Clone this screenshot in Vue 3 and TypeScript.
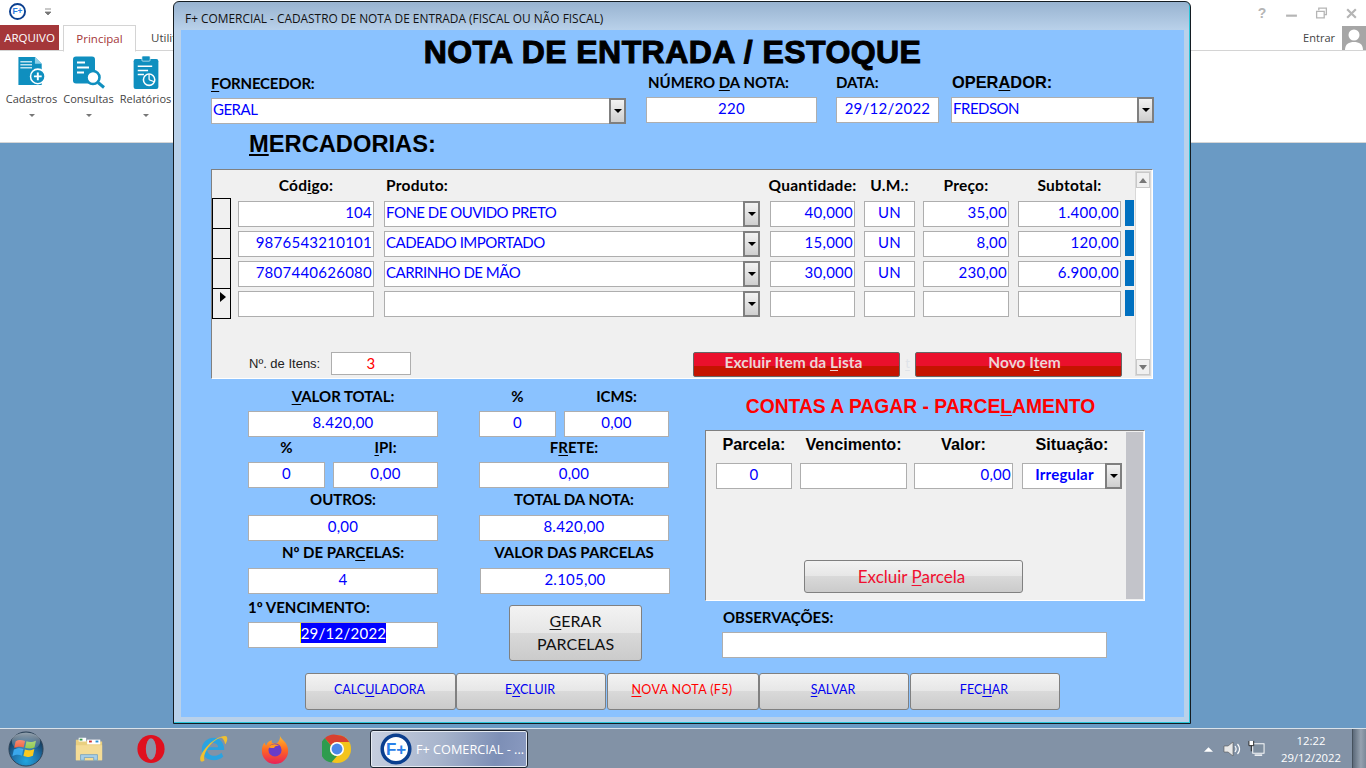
<template>
  <div class="screen">
    <header class="ribbon">
      <div class="qat">
        <svg class="logo-s" viewBox="0 0 36 36"><circle cx="18" cy="18" r="16" fill="#fff" stroke="#0b3f8f" stroke-width="4"/><text x="18" y="24" text-anchor="middle" class="logo-t">F+</text></svg>
        <svg class="qat-arrow" viewBox="0 0 8 8"><path d="M1 1h6M1 4h6L4 7z" fill="#777" stroke="#777" stroke-width=".8"/></svg>
      </div>
      <div class="tabs">
        <div class="tab-file">ARQUIVO</div>
        <div class="tab-on">Principal</div>
        <div class="tab-off">Utilitários</div>
        <div class="account">Entrar
          <svg class="avatar" viewBox="0 0 24 24"><rect width="24" height="24" fill="#a6a6a6"/><circle cx="12" cy="9" r="5.5" fill="#fff"/><path d="M3 24c0-6 4-8 9-8s9 2 9 8z" fill="#fff"/></svg>
        </div>
      </div>
      <div class="ribbon-btns">
        <div class="rb">
          <svg class="ri" viewBox="0 0 30 34"><path d="M1 1h17l7 7v22H1z" fill="#0f8fbf"/><path d="M18 1l7 7h-7z" fill="#8fd0e8"/><path d="M3 6h12M3 9h12M3 12h12" stroke="#bfe3f0" stroke-width="1.5"/><circle cx="21" cy="21" r="7.5" fill="#0f8fbf" stroke="#fff" stroke-width="1.6"/><path d="M17 21h8M21 17v8" stroke="#fff" stroke-width="2"/></svg>
          <span>Cadastros</span><i class="car"></i>
        </div>
        <div class="rb">
          <svg class="ri" viewBox="0 0 32 32"><rect x="0" y="0" width="22" height="27" rx="3" fill="#0f8fbf"/><path d="M4 6h8M4 11h12M4 16h7" stroke="#fff" stroke-width="2"/><circle cx="20" cy="21" r="6.5" fill="#fff" stroke="#0f8fbf" stroke-width="2.6"/><path d="M25 26l6 5" stroke="#0f8fbf" stroke-width="3"/></svg>
          <span>Consultas</span><i class="car"></i>
        </div>
        <div class="rb">
          <svg class="ri ri3" viewBox="0 0 24 32"><rect x="0" y="3" width="24" height="29" rx="2" fill="#0f8fbf"/><rect x="8" y="0" width="8" height="5" rx="1" fill="#0f8fbf" stroke="#fff" stroke-width=".6"/><path d="M4 10h14M4 14h10M4 18h6" stroke="#fff" stroke-width="1.5"/><circle cx="15" cy="23" r="5.5" fill="#0f8fbf" stroke="#fff" stroke-width="1.5"/><path d="M15 23v-5M15 23l5 2" stroke="#fff" stroke-width="1.2"/></svg>
          <span>Relatórios</span><i class="car"></i>
        </div>
      </div>
      <div class="win-ctl">
        <span class="q">?</span>
        <svg viewBox="0 0 12 12"><path d="M1 8h10" stroke="#b5b5b5" stroke-width="2"/></svg>
        <svg viewBox="0 0 12 12"><path d="M3.5 3V1h7v6h-2M1.5 4h7v6h-7z" fill="none" stroke="#b5b5b5" stroke-width="1.2"/></svg>
        <svg viewBox="0 0 12 12"><path d="M2 2l8 8M10 2l-8 8" stroke="#b5b5b5" stroke-width="2"/></svg>
      </div>
    </header>

    <main class="desktop"></main>

    <footer class="taskbar">
      <svg class="orb" viewBox="0 0 38 38">
        <defs>
          <radialGradient id="og" cx="50%" cy="85%" r="75%"><stop offset="0" stop-color="#22a6e0"/><stop offset=".55" stop-color="#1f6ea6"/><stop offset="1" stop-color="#12324e"/></radialGradient>
          <linearGradient id="gl" x1="0" y1="0" x2="0" y2="1"><stop offset="0" stop-color="#fff" stop-opacity=".55"/><stop offset="1" stop-color="#fff" stop-opacity=".05"/></linearGradient>
        </defs>
        <circle cx="19" cy="19" r="18" fill="url(#og)" stroke="#2c4256"/>
        <path d="M8 11c3-2 6-2 10-.5l-1.500 7c-3-1.300-6-1.300-10 .5z" fill="#f0512a"/>
        <path d="M19.500 10.800c3 1.200 6 1.200 10-.5l-1.500 7c-3 1.500-7 1.500-10 .3z" fill="#86c53c"/>
        <path d="M6.200 19.500c4-1.800 7-1.800 10-.5l-1.500 7c-3-1.300-6-1.300-10 .5z" fill="#3aa8ec"/>
        <path d="M17.800 19.500c3 1.200 6 1.200 10-.5l-1.500 7c-4 1.700-7 1.700-10 .5z" fill="#fbc91f"/>
        <ellipse cx="19" cy="11" rx="15" ry="9.500" fill="url(#gl)"/>
      </svg>
      <svg class="tb folder" viewBox="0 0 32 32">
        <path d="M2 6h10l2 2h16v20H2z" fill="#e9cf80"/><path d="M5 4h8v4H5z" fill="#fff"/><rect x="6" y="5" width="3" height="2" fill="#3a9a4a"/>
        <path d="M14 6h14v5H14z" fill="#fff"/><rect x="16" y="7" width="3" height="2" fill="#cc3030"/><rect x="23" y="7" width="3" height="2" fill="#2a90d0"/>
        <path d="M2 12h28v16H2z" fill="#f4dc96"/><path d="M7 28v-6h18v6h-4v-3H11v3z" fill="#a8cfe8" stroke="#6a9cc0" stroke-width=".8"/>
      </svg>
      <svg class="tb opera" viewBox="0 0 32 32"><ellipse cx="16" cy="16" rx="14.500" ry="15" fill="#e0101e"/><ellipse cx="16" cy="16" rx="5.500" ry="11.500" fill="#8a93a6"/></svg>
      <svg class="tb ie" viewBox="0 0 32 32"><path d="M4 17C4 9 10 4 17 4s11 6 11 13H10c0 6 9 9 15 3l2 4c-8 8-23 3-23-7zM10.500 14h11c-.5-6-10-6-11 0z" fill="#2ba3e0"/><path d="M3 29C-1 24 14 3 29 2c3 0 3 5 0 9-1-5-3-7-5-7C14 7 4 22 7 28c-1 1-3 2-4 1z" fill="#f0c030"/></svg>
      <svg class="tb ff" viewBox="0 0 32 32">
        <defs><linearGradient id="ffg" x1="0" y1="0" x2="0" y2="1"><stop offset="0" stop-color="#ffc22e"/><stop offset=".5" stop-color="#ff6a20"/><stop offset="1" stop-color="#e8205a"/></linearGradient></defs>
        <path d="M21 1c1 5 9 7 9 17a14 14 0 0 1-28 0c0-4 1-7 3-9 0 2 1 3 2 3 1-4 4-5 6-5-2 3 1 3 5 3 3-3 4-6 3-9z" fill="url(#ffg)"/>
        <circle cx="16" cy="17" r="7" fill="#6a3cc8"/><path d="M9 14c3-4 9-4 12-1-3-1-5 0-6 2-2 0-4 0-6-1z" fill="#ff9a20"/>
      </svg>
      <svg class="tb chrome" viewBox="0 0 32 32"><circle cx="16" cy="16" r="15" fill="#f3c41c"/><path d="M16 1a15 15 0 0 1 13 7.500H16a7.500 7.500 0 0 0-6.500 3.800L3 4.500A15 15 0 0 1 16 1z" fill="#d8402f"/><path d="M3 4.500l6.500 7.800A7.500 7.500 0 0 0 16 23.500L10 30.500A15 15 0 0 1 3 4.500z" fill="#2e9c4e"/><circle cx="16" cy="16" r="7.500" fill="#fff"/><circle cx="16" cy="16" r="5.800" fill="#4a88e8"/></svg>
      <div class="task-app">
        <svg class="logo-l" viewBox="0 0 36 36"><circle cx="18" cy="18" r="15.500" fill="#fff" stroke="#0b3f8f" stroke-width="4"/><text x="18" y="24.500" text-anchor="middle" class="logo-t2">F+</text></svg>
        <span>F+ COMERCIAL - ...</span>
      </div>
      <div class="tray">
        <svg class="tr-a" viewBox="0 0 10 6"><path d="M0 6l5-5 5 5z" fill="#fff"/></svg>
        <svg class="tr-s" viewBox="0 0 18 18"><path d="M1 6h4l5-4v14l-5-4H1z" fill="#e8e8e8" stroke="#555" stroke-width=".6"/><path d="M12 6c1.500 2 1.500 4 0 6M14.500 4c2.500 3 2.500 7 0 10" fill="none" stroke="#fff" stroke-width="1.200"/></svg>
        <svg class="tr-n" viewBox="0 0 18 18"><rect x="5" y="4" width="12" height="10" fill="#7f8fa0" stroke="#fff"/><path d="M7 16h8" stroke="#fff" stroke-width="1.500"/><path d="M1 1v5h5V1M3.500 6v6" fill="#fff" stroke="#222"/></svg>
        <div class="clock"><span>12:22</span><span>29/12/2022</span></div>
        <div class="show-desk"></div>
      </div>
    </footer>

    <section class="window">
      <div class="titlebar">F+ COMERCIAL - CADASTRO DE NOTA DE ENTRADA (FISCAL OU NÃO FISCAL)</div>
      <div class="client">
        <h1>NOTA DE ENTRADA / ESTOQUE</h1>

        <div class="head">
          <div class="h-forn">
            <label class="lb lb-a"><u>F</u>ORNECEDOR:</label>
            <div class="combo"><span>GERAL</span><b class="dd"></b></div>
          </div>
          <div class="h-num">
            <label class="lb"><span>NÚMERO <u>D</u>A NOTA:</span></label>
            <div class="fd ctr">220</div>
          </div>
          <div class="h-data">
            <label class="lb">DATA:</label>
            <div class="fd ctr">29/12/2022</div>
          </div>
          <div class="h-op">
            <label class="lb lb-b">OPER<u>A</u>DOR:</label>
            <div class="combo"><span>FREDSON</span><b class="dd"></b></div>
          </div>
        </div>

        <h2><u>M</u>ERCADORIAS:</h2>

        <div class="sub">
          <div class="sub-main">
            <div class="sh">
              <span class="c-sel"></span>
              <span class="c-code">Cód<u>i</u>go:</span>
              <span class="c-prod lft">Produto:</span>
              <span class="c-qty">Quantidade:</span>
              <span class="c-um">U.M.:</span>
              <span class="c-pr">Preço:</span>
              <span class="c-sub">Subtotal:</span>
            </div>
            <div v-for="(r, i) in rows" :key="i" class="sr">
              <span class="c-sel sel"><i v-if="i === 3" class="tri"></i></span>
              <div class="fd rgt c-code">{{ r.code }}</div>
              <div class="combo c-prod"><span>{{ r.prod }}</span><b class="dd"></b></div>
              <div class="fd rgt c-qty">{{ r.qty }}</div>
              <div class="fd ctr c-um">{{ r.um }}</div>
              <div class="fd rgt c-pr">{{ r.price }}</div>
              <div class="fd rgt c-sub">{{ r.total }}</div>
              <i class="blue"></i>
            </div>
            <div class="sf">
              <span class="itens-l">Nº. de Itens:</span>
              <div class="fd ctr itens">3</div>
              <button class="btn-red b-ex">Excluir Item da <u>L</u>ista</button>
              <span class="stray"><u>t</u></span>
              <button class="btn-red b-nv">Novo I<u>t</u>em</button>
            </div>
          </div>
          <div class="sb">
            <div class="sb-b"><i class="up"></i></div>
            <div class="sb-t"></div>
            <div class="sb-b"><i class="down"></i></div>
          </div>
        </div>

        <div class="lower">
          <div class="totals">
            <label class="t-lb s2"><u>V</u>ALOR TOTAL:</label>
            <label class="t-lb t1">%</label>
            <label class="t-lb t2">ICMS:</label>
            <div class="fd ctr s2">8.420,00</div>
            <div class="fd ctr t1">0</div>
            <div class="fd ctr t2">0,00</div>

            <label class="t-lb">%</label>
            <label class="t-lb"><u>I</u>PI:</label>
            <label class="t-lb t12">F<u>R</u>ETE:</label>
            <div class="fd ctr">0</div>
            <div class="fd ctr">0,00</div>
            <div class="fd ctr t12">0,00</div>

            <label class="t-lb s2 dn">OUTROS:</label>
            <label class="t-lb t12 dn">TOTAL DA NOTA:</label>
            <div class="fd ctr s2">0,00</div>
            <div class="fd ctr t12">8.420,00</div>

            <label class="t-lb s2 dn">Nº DE PAR<u>C</u>ELAS:</label>
            <label class="t-lb t12 dn">VALOR DAS PARCELAS</label>
            <div class="fd ctr s2">4</div>
            <div class="fd ctr t12 nudge">2.105,00</div>

            <label class="t-lb s2 dn2 lft">1º VENCIMENTO:</label>
            <button class="btn gerar"><span><u>G</u>ERAR</span><span>PARCELAS</span></button>
            <div class="fd ctr s2"><span class="selected">29/12/2022</span></div>
          </div>

          <div class="contas">
            <div class="c-title">CONTAS A PAGAR - PARCE<u>L</u>AMENTO</div>
            <div class="parc">
              <div class="parc-main">
                <div class="ph">
                  <span class="p1">Parcela:</span><span class="p2">Vencimento:</span><span class="p3">Valor:</span><span class="p4">Situação:</span>
                </div>
                <div class="pr">
                  <div class="fd ctr p1">0</div>
                  <div class="fd p2"></div>
                  <div class="fd rgt p3">0,00</div>
                  <div class="combo p4 situ"><span>Irregular</span><b class="dd"></b></div>
                </div>
                <button class="btn del-p">Excluir <u>P</u>arcela</button>
              </div>
              <div class="parc-sb"></div>
            </div>
            <label class="lb obs-l">OBSERVAÇÕES:</label>
            <div class="fd obs"></div>
          </div>
        </div>

        <div class="actions">
          <button class="btn a1 bl">CALC<u>U</u>LADORA</button>
          <button class="btn a2 bl">E<u>X</u>CLUIR</button>
          <button class="btn a3 rd"><u>N</u>OVA NOTA (F5)</button>
          <button class="btn a4 bl"><u>S</u>ALVAR</button>
          <button class="btn a5 bl">FEC<u>H</u>AR</button>
        </div>
      </div>
    </section>
  </div>
</template>

<script setup lang="ts">
interface Row { code: string; prod: string; qty: string; um: string; price: string; total: string }
const rows: Row[] = [
  { code: '104', prod: 'FONE DE OUVIDO PRETO', qty: '40,000', um: 'UN', price: '35,00', total: '1.400,00' },
  { code: '9876543210101', prod: 'CADEADO IMPORTADO', qty: '15,000', um: 'UN', price: '8,00', total: '120,00' },
  { code: '7807440626080', prod: 'CARRINHO DE MÃO', qty: '30,000', um: 'UN', price: '230,00', total: '6.900,00' },
  { code: '', prod: '', qty: '', um: '', price: '', total: '' },
]
</script>

<style>
html, body { margin: 0; height: 100%; overflow: hidden; }
</style>

<style scoped>
.screen { position: relative; width: 1366px; height: 768px; display: flex; flex-direction: column; overflow: hidden; font-family: "Lato", "Liberation Sans", sans-serif; font-size: 15px; color: #000; background: #6a9ac4; }
u { text-underline-offset: 2px; }

/* ribbon */
.ribbon { position: relative; height: 143px; flex: none; background: #fff; border-bottom: 1px solid #d6d6d6; box-sizing: border-box; font-family: "Open Sans", sans-serif; font-size: 11px; color: #444; }
.qat { height: 25px; display: flex; align-items: center; padding-left: 9px; gap: 18px; }
.logo-s { width: 17px; height: 17px; margin-top: -3px; }
.logo-t { font: bold 18px "Liberation Sans", sans-serif; fill: #2a7be0; }
.qat-arrow { width: 8px; height: 8px; margin-top: -2px; }
.tabs { height: 25px; display: flex; border-bottom: 1px solid #d4d4d4; box-sizing: content-box; }
.tab-file { width: 59px; background: #a4373a; color: #fff; text-align: center; line-height: 25px; font-size: 11.5px; }
.tab-on { width: 71px; margin-left: 4px; height: 25px; border: 1px solid #d4d4d4; border-bottom: 1px solid #fff; box-sizing: content-box; color: #a4373a; text-align: center; line-height: 25px; font-size: 11.5px; background: #fff; }
.tab-off { margin-left: 15px; line-height: 25px; font-size: 11.5px; }
.account { margin-left: auto; display: flex; align-items: center; gap: 7px; font-size: 11px; color: #444; line-height: 22px; }
.avatar { width: 24px; height: 24px; display: block; }
.ribbon-btns { display: flex; padding: 5px 0 0 3px; }
.rb { width: 57px; display: flex; flex-direction: column; align-items: center; font-size: 11px; white-space: nowrap; }
.ri { width: 32px; height: 33px; margin-bottom: 2px; display: block; }
.ri3 { width: 26px; }
.car { margin-top: 8px; width: 0; height: 0; border: 3px solid transparent; border-top: 3px solid #777; border-bottom: 0; }
.win-ctl { position: absolute; top: 5px; right: 8px; display: flex; align-items: center; gap: 17px; }
.win-ctl svg { width: 13px; height: 13px; }
.q { color: #b5b5b5; font: bold 14px "Liberation Sans", sans-serif; width: 12px; text-align: center; }

.desktop { flex: 1; background: #6a9ac4; }

/* taskbar */
.taskbar { height: 40px; flex: none; display: flex; align-items: center; background: #8292a6; border-top: 1px solid #d9e2ea; box-sizing: border-box; color: #fff; font-family: "Open Sans", sans-serif; }
.orb { width: 36px; height: 36px; margin-left: 8px; }
.tb { width: 30px; height: 30px; margin-left: 32px; }
.folder { margin-left: 30px; }
.task-app { width: 158px; height: 38px; margin-left: 18px; box-sizing: border-box; border: 1px solid #1c2430; border-radius: 3px; background: linear-gradient(100deg, #c8d0e0 0%, #a7b4cc 45%, #7d8fb6 80%, #8a9ac0 100%); display: flex; align-items: center; padding-left: 9px; gap: 4px; font-size: 12.7px; white-space: nowrap; box-shadow: inset 0 0 0 1px #e6ebf2; overflow: hidden; }
.logo-l { width: 32px; height: 32px; flex: none; }
.logo-t2 { font: bold 19px "Liberation Sans", sans-serif; fill: #2a80e8; }
.tray { margin-left: auto; display: flex; align-items: center; height: 100%; }
.tr-a { width: 9px; height: 6px; margin-right: 10px; }
.tr-s { width: 18px; height: 18px; margin-right: 7px; }
.tr-n { width: 17px; height: 17px; margin-right: 5px; }
.clock { width: 82px; display: flex; flex-direction: column; align-items: center; font-size: 11.3px; line-height: 17px; }
.show-desk { width: 14px; height: 100%; background: linear-gradient(90deg, #5c6a7a, #96a2b0 60%, #7a8898); border-left: 1px solid #46525e; box-sizing: border-box; }

/* window */
.window { position: absolute; left: 173px; top: 1px; width: 1018px; height: 723px; box-sizing: border-box; padding: 0 6px 6px 7px; border: 1px solid #141c22; border-radius: 6px 6px 0 0; background: linear-gradient(180deg, #98b3d0 0, #b9d1ea 28px); box-shadow: inset -1px -1px 0 #28c4d8; }
.titlebar { height: 28px; line-height: 32px; padding-left: 4px; font-family: "Open Sans", sans-serif; font-size: 11.9px; color: #111; white-space: nowrap; }
.client { height: 687px; background: #8ac2ff; display: flex; flex-direction: column; }
h1 { margin: 0; height: 42px; text-align: center; font: bold 32px/44px "Liberation Sans", sans-serif; padding-right: 20px; -webkit-text-stroke: 1px #000; letter-spacing: .42px; }
h2 { margin: 6px 0 11px 68px; font: bold 23.7px/28px "Liberation Sans", sans-serif; }

.lb { display: block; font-weight: 700; font-size: 15px; line-height: 20px; white-space: nowrap; }
.lb-a { letter-spacing: -.2px; }
.lb-b { font: bold 16.4px/20px "Liberation Sans", sans-serif; }
.fd { box-sizing: border-box; background: #fff; border: 1px solid #aeaeae; height: 26px; line-height: 20px; color: #00f; font-size: 15px; padding: 0 1px; white-space: nowrap; overflow: hidden; letter-spacing: .25px; }
.ctr { text-align: center; }
.rgt { text-align: right; }
.combo { box-sizing: border-box; background: #fff; border: 1px solid #aeaeae; height: 26px; display: flex; justify-content: space-between; color: #00f; font-size: 15px; line-height: 20px; padding-left: 1px; white-space: nowrap; letter-spacing: -.5px; }
.dd { position: relative; width: 17px; flex: none; box-sizing: border-box; margin: -1px -1px -1px 0; border: 2px solid #7f7f7f; background: linear-gradient(180deg, #f2f2f2, #cfcfcf); }
.dd::after { content: ""; position: absolute; left: 3px; top: 9px; border: 4px solid transparent; border-top: 4px solid #000; border-bottom: 0; }

.head { display: flex; height: 52px; padding-left: 30px; }
.h-forn { width: 415px; padding-top: 1px; }
.h-forn .lb { padding-bottom: 5px; }
.h-num { width: 171px; margin-left: 20px; }
.h-num .lb, .h-data .lb, .h-op .lb { padding-bottom: 5px; }
.h-num .lb span { margin-left: 2px; }
.h-data { width: 103px; margin-left: 19px; }
.h-op { width: 203px; margin-left: 12px; }
.h-op .lb { padding-left: 1px; }

/* subform */
.sub { margin-left: 30px; width: 942px; height: 210px; box-sizing: border-box; flex: none; display: flex; background: #f0f0f0; border-top: 1px solid #808080; border-left: 1px solid #808080; border-right: 1px solid #fff; border-bottom: 1px solid #fff; }
.sub-main { width: 923px; flex: none; }
.sh { display: flex; height: 28px; line-height: 30px; font-weight: 700; font-size: 15.5px; letter-spacing: .25px; white-space: nowrap; }
.sh span { display: flex; justify-content: center; }
.sh span.lft { justify-content: flex-start; padding-left: 2px; box-sizing: border-box; }
.sr { display: flex; height: 30px; align-items: flex-start; }
.sr > .fd, .sr > .combo { margin-top: 3px; }
.c-sel { width: 19px; flex: none; }
.c-code { width: 136px; margin-left: 7px; flex: none; }
.c-prod { width: 376px; margin-left: 10px; flex: none; }
.c-qty { width: 85px; margin-left: 10px; flex: none; }
.c-um { width: 51px; margin-left: 9px; flex: none; }
.c-pr { width: 86px; margin-left: 8px; flex: none; }
.c-sub { width: 103px; margin-left: 9px; flex: none; }
.sel { box-sizing: border-box; height: 31px; border: 1px solid #000; position: relative; }
.tri { position: absolute; left: 7px; top: 3px; border: 5px solid transparent; border-left: 6px solid #000; border-right: 0; }
.blue { width: 9px; height: 26px; margin: 2px 0 0 4px; background: #0070c0; flex: none; }
.sf { display: flex; align-items: flex-start; margin-top: 34px; }
.itens-l { margin-left: 37px; width: 82px; font: 13px/24px "Liberation Sans", sans-serif; color: #222; }
.itens { width: 80px; height: 23px; line-height: 20px; color: #f00; }
.btn-red { box-sizing: border-box; width: 207px; height: 25px; padding: 0 0 5px; border: 1px solid #666; border-radius: 2px; background: linear-gradient(180deg, #ea102c 0 55%, #c51400 55% 100%); color: #ecd5d5; font: 700 15.5px/18px "Lato", sans-serif; }
.b-ex { margin-left: 282px; padding-right: 6px; }
.b-nv { padding-left: 12px; }
.stray { width: 15px; text-align: center; color: #dfe3e8; font-size: 13px; line-height: 22px; }

.sb { width: 16px; margin: 1px 0; height: 205px; display: flex; flex-direction: column; background: #fff; border: 1px solid #d8d8d8; box-sizing: border-box; }
.sb-b { height: 16px; flex: none; display: flex; align-items: center; justify-content: center; background: #f0f0f0; border: 1px solid #c8c8c8; box-sizing: border-box; }
.sb-t { flex: 1; background: #fff; }
.up { border: 4px solid transparent; border-bottom: 5px solid #777; border-top: 0; }
.down { border: 4px solid transparent; border-top: 5px solid #777; border-bottom: 0; }

/* lower */
.lower { display: flex; margin-top: 7px; height: 275px; flex: none; }
.totals { margin-left: 67px; width: 421px; display: grid; column-gap: 8px; grid-template-columns: 77px 105px 25px 77px 105px; grid-template-rows: 25px 26px 25px 26px 27px 26px 27px 26px 28px 26px; }
.s2 { grid-column: 1 / span 2; }
.t1 { grid-column: 4; }
.t2 { grid-column: 5; }
.t12 { grid-column: 4 / span 2; }
.t-lb { display: block; font-weight: 700; font-size: 15px; line-height: 20px; text-align: center; white-space: nowrap; }
.dn { line-height: 22px; }
.dn2 { line-height: 26px; }
.lft { text-align: left; }
.nudge { position: relative; left: 1px; }
.selected { display: inline-block; background: #00f; color: #fff; height: 20px; line-height: 20px; border-left: 1px solid #ff0; }
.btn { box-sizing: border-box; padding: 0; border: 1px solid #808080; border-radius: 3px; background: linear-gradient(180deg, #f3f3f3 0, #e6e6e6 50%, #d9d9d9 50%, #cbcbcb 100%); font-family: "Lato", sans-serif; color: #111; }
.gerar { grid-column: 4 / span 2; grid-row: 9 / span 2; margin: 11px 0 -13px 30px; width: 133px; height: 56px; padding-bottom: 2px; display: flex; flex-direction: column; align-items: center; justify-content: center; font-size: 16px; line-height: 23px; }

.contas { margin-left: 36px; width: 440px; display: flex; flex-direction: column; }
.c-title { height: 44px; color: #f00; font: bold 19.3px/42px "Liberation Sans", sans-serif; text-align: center; padding-right: 9px; white-space: nowrap; }
.parc { box-sizing: border-box; height: 171px; flex: none; display: flex; background: #f0f0f0; border-top: 1px solid #808080; border-left: 1px solid #808080; border-right: 1px solid #fff; border-bottom: 1px solid #fff; }
.parc-main { width: 420px; display: flex; flex-direction: column; }
.parc-sb { width: 17px; margin: 1px 0; background: #c3c4ca; }
.ph { display: flex; height: 32px; font: bold 16.2px/26px "Liberation Sans", sans-serif; white-space: nowrap; }
.ph span { display: flex; justify-content: center; }
.p1 { width: 76px; margin-left: 10px; flex: none; }
.p2 { width: 107px; margin-left: 8px; flex: none; }
.p3 { width: 99px; margin-left: 7px; flex: none; }
.p4 { width: 100px; margin-left: 9px; flex: none; }
.pr { display: flex; }
.situ { font-weight: 700; letter-spacing: .2px; }
.situ span { flex: 1; text-align: center; }
.del-p { width: 219px; height: 33px; margin: 71px 0 0 98px; color: #f01030; font-size: 17px; padding-right: 4px; }
.obs-l { margin: 6px 0 5px 18px; }
.obs { margin-left: 17px; width: 385px; }

.actions { display: flex; margin: 12px 0 0 124px; height: 37px; }
.actions .btn { font-size: 12.5px; height: 37px; padding: 0 2px 4px 0; }
.bl { color: #0000f0; }
.rd { color: #f00; }
.a1 { width: 151px; }
.a2 { width: 150px; }
.a3 { width: 152px; margin-left: 1px; letter-spacing: .35px; padding-right: 5px; }
.a4 { width: 150px; }
.a5 { width: 150px; margin-left: 1px; }
</style>
